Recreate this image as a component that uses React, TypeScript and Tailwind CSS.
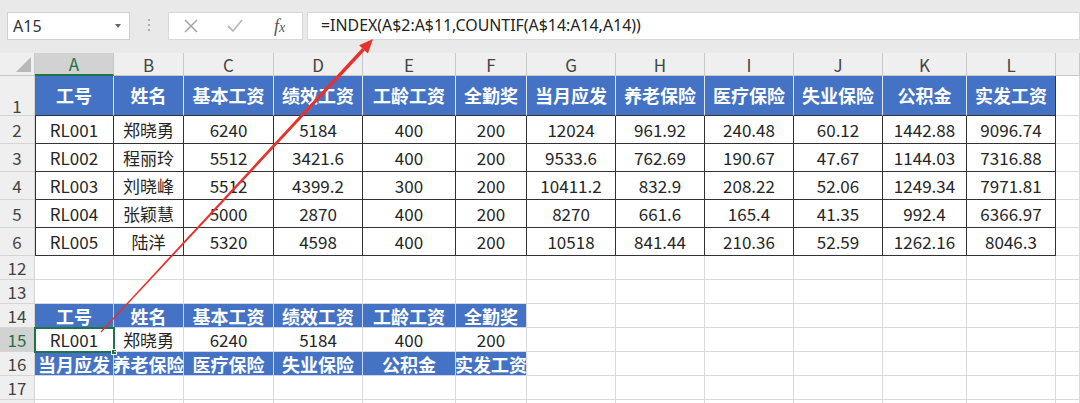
import { Fragment } from "react";

const cols = ["A", "B", "C", "D", "E", "F", "G", "H", "I", "J", "K", "L", ""];

const headers = ["工号", "姓名", "基本工资", "绩效工资", "工龄工资", "全勤奖", "当月应发", "养老保险", "医疗保险", "失业保险", "公积金", "实发工资"];

const rows = [
  ["RL001", "郑晓勇", "6240", "5184", "400", "200", "12024", "961.92", "240.48", "60.12", "1442.88", "9096.74"],
  ["RL002", "程丽玲", "5512", "3421.6", "400", "200", "9533.6", "762.69", "190.67", "47.67", "1144.03", "7316.88"],
  ["RL003", "刘晓峰", "5512", "4399.2", "300", "200", "10411.2", "832.9", "208.22", "52.06", "1249.34", "7971.81"],
  ["RL004", "张颖慧", "5000", "2870", "400", "200", "8270", "661.6", "165.4", "41.35", "992.4", "6366.97"],
  ["RL005", "陆洋", "5320", "4598", "400", "200", "10518", "841.44", "210.36", "52.59", "1262.16", "8046.3"],
];

const lookupHead = ["工号", "姓名", "基本工资", "绩效工资", "工龄工资", "全勤奖"];
const lookupRow = ["RL001", "郑晓勇", "6240", "5184", "400", "200"];
const lookupFoot = ["当月应发", "养老保险", "医疗保险", "失业保险", "公积金", "实发工资"];

const gridCols =
  "grid grid-cols-[35px_79px_70px_90px_89px_93px_71px_89px_89px_89px_89px_84px_89px_1fr]";

const font = { fontFamily: '"Noto Sans CJK SC", "Noto Sans", sans-serif' };

function RowHead({ n, h, active = false, bottom = false }: { n: number; h: string; active?: boolean; bottom?: boolean }) {
  return (
    <div
      className={`${h} flex justify-center ${bottom ? "items-end pb-[1px]" : "items-center"} border-b border-r border-[#d4d4d4] text-[17px] leading-none ${
        active ? "bg-[#d2d2d2] text-[#217346] border-r-[#217346]" : "bg-[#efefef] text-[#444]"
      }`}
    >
      {n}
    </div>
  );
}

function Blank({ h, n }: { h: string; n: number }) {
  return (
    <>
      {Array.from({ length: n }).map((_, i) => (
        <div key={i} className={`${h} border-b border-r border-[#dadada] bg-white`} />
      ))}
    </>
  );
}

function BlueCell({ text, h, last = false }: { text: string; h: string; last?: boolean }) {
  return (
    <div
      className={`${h} flex items-center justify-center overflow-hidden whitespace-nowrap bg-[#4472c4] text-white font-bold text-[18px] leading-none border-b ${
        last ? "border-r border-r-[#dadada]" : "border-r border-r-[#c9d5ee]"
      } border-b-[#c9d5ee]`}
    >
      {text}
    </div>
  );
}

export default function App() {
  return (
    <div className="relative w-[1080px] h-[403px] overflow-hidden bg-white text-[#262626]" style={font}>
      {/* formula bar */}
      <div className="flex h-[53px] items-start bg-[#e9e9e9] pl-[7px] pt-[12px]">
        <div className="flex h-[28px] w-[123px] items-center justify-between border border-[#d0d0d0] bg-white pl-[5px] pr-[8px]">
          <span className="text-[16px] text-[#333]" style={{ fontFamily: '"Noto Sans", sans-serif' }}>A15</span>
          <span className="h-0 w-0 border-x-[3.5px] border-t-[4px] border-x-transparent border-t-[#666]" />
        </div>
        <div className="flex w-[38px] flex-col items-center gap-[3px] pt-[7px]">
          <span className="h-[2px] w-[2px] rounded-full bg-[#9a9a9a]" />
          <span className="h-[2px] w-[2px] rounded-full bg-[#9a9a9a]" />
          <span className="h-[2px] w-[2px] rounded-full bg-[#9a9a9a]" />
        </div>
        <div className="flex h-[28px] w-[135px] items-center border border-[#d8d8d8] bg-white">
          <svg width="14" height="14" viewBox="0 0 14 14" className="ml-[15px]">
            <path d="M1 1 L13 13 M13 1 L1 13" stroke="#a6a6a6" strokeWidth="1.5" fill="none" />
          </svg>
          <svg width="16" height="14" viewBox="0 0 16 14" className="ml-[29px]">
            <path d="M1 7 L6 12 L15 1" stroke="#b9b9b9" strokeWidth="1.8" fill="none" />
          </svg>
          <span
            className="ml-[31px] text-[18px] italic text-[#555]"
            style={{ fontFamily: '"Liberation Serif", serif' }}
          >
            f<span className="text-[14px]">x</span>
          </span>
        </div>
        <div className="ml-[4px] flex h-[28px] flex-1 items-center border border-[#d8d8d8] bg-white pl-[13px]">
          <span className="text-[15.9px] text-[#222]" style={{ fontFamily: '"Noto Sans", sans-serif' }}>
            =INDEX(A$2:A$11,COUNTIF(A$14:A14,A14))
          </span>
        </div>
      </div>

      {/* sheet */}
      <div className={gridCols}>
        {/* column headers */}
        <div className="relative h-[23px] border-b border-r border-[#c8c8c8] bg-[#efefef]">
          <svg width="15" height="15" viewBox="0 0 15 15" className="absolute bottom-[3px] right-[3px]">
            <path d="M15 0 L15 15 L0 15 Z" fill="#b8b8b8" />
          </svg>
        </div>
        {cols.map((c, i) => (
          <div
            key={c + i}
            className={`flex h-[23px] items-center justify-center border-r text-[17px] leading-none ${
              i === 0
                ? "border-b-2 border-b-[#217346] border-r-[#c8c8c8] bg-[#d2d2d2] text-[#217346]"
                : "border-b border-[#c8c8c8] bg-[#efefef] text-[#444]"
            }`}
          >
            {c}
          </div>
        ))}

        {/* row 1 */}
        <RowHead n={1} h="h-[40px]" bottom />
        {headers.map((t, i) => (
          <div
            key={t}
            className={`flex h-[40px] items-center justify-center bg-[#4472c4] text-[18px] font-bold text-white border-b border-b-[#333] border-r ${
              i === headers.length - 1 ? "border-r-[#333]" : "border-r-[#dfe6f5]"
            }`}
          >
            {t}
          </div>
        ))}
        <Blank h="h-[40px]" n={1} />

        {/* rows 2-6 */}
        {rows.map((r, ri) => (
          <Fragment key={ri}>
            <RowHead n={ri + 2} h="h-[28px]" />
            {r.map((v, ci) => (
              <div
                key={ci}
                className={`flex h-[28px] items-center justify-center whitespace-nowrap border-b border-r border-[#333] text-[17px] ${
                  ci === 0 ? "shadow-[inset_1px_0_0_#333]" : ""
                }`}
              >
                {v}
              </div>
            ))}
            <Blank h="h-[28px]" n={1} />
          </Fragment>
        ))}

        {/* rows 12, 13 */}
        <RowHead n={12} h="h-[24px]" />
        <Blank h="h-[24px]" n={13} />
        <RowHead n={13} h="h-[24px]" />
        <Blank h="h-[24px]" n={13} />

        {/* row 14 */}
        <RowHead n={14} h="h-[24px]" />
        {lookupHead.map((t, i) => (
          <BlueCell key={t} text={t} h="h-[24px]" last={i === lookupHead.length - 1} />
        ))}
        <Blank h="h-[24px]" n={7} />

        {/* row 15 */}
        <RowHead n={15} h="h-[24px]" active />
        {lookupRow.map((v, i) => (
          <div
            key={i}
            className="relative flex h-[24px] items-center justify-center whitespace-nowrap border-b border-r border-[#dadada] text-[17px] leading-none"
          >
            {v}
            {i === 0 && (
              <>
                <div className="absolute -left-[1px] -top-[1px] h-[26px] w-[81px] border-2 border-[#217346]" />
                <div className="absolute -bottom-[4px] -right-[4px] h-[6px] w-[6px] border border-white bg-[#217346]" />
              </>
            )}
          </div>
        ))}
        <Blank h="h-[24px]" n={7} />

        {/* row 16 */}
        <RowHead n={16} h="h-[24px]" />
        {lookupFoot.map((t, i) => (
          <BlueCell key={t} text={t} h="h-[24px]" last={i === lookupFoot.length - 1} />
        ))}
        <Blank h="h-[24px]" n={7} />

        {/* rows 17, 18 */}
        <RowHead n={17} h="h-[24px]" />
        <Blank h="h-[24px]" n={13} />
        <RowHead n={18} h="h-[24px]" />
        <Blank h="h-[24px]" n={13} />
      </div>

      {/* red arrow */}
      <svg className="pointer-events-none absolute left-0 top-0" width="1080" height="403" viewBox="0 0 1080 403">
        <polygon
          points="101.4,332.4 100.6,331.6 362.2,48.1 364.8,50.5"
          fill="#e8302c"
        />
        <polygon points="373,39 359.1,45.2 367.9,53.4" fill="#e8302c" />
      </svg>
    </div>
  );
}
